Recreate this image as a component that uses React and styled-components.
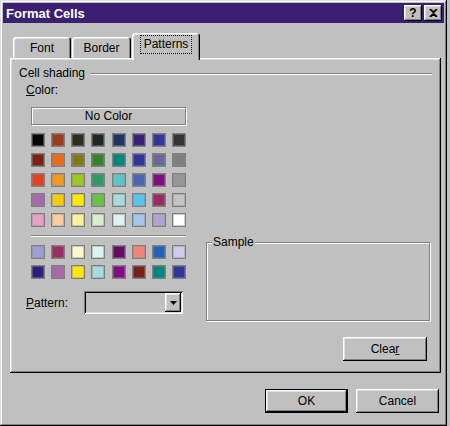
import styled, { createGlobalStyle } from "styled-components";

const GlobalStyle = createGlobalStyle`
  body {
    margin: 0;
    background: #c0c0c0;
    font-family: "Liberation Sans", Arial, sans-serif;
    font-size: 12px;
    color: #000;
  }
`;

const raised = `
  box-shadow: inset -1px -1px #000, inset 1px 1px #fff,
    inset -2px -2px #808080, inset 2px 2px #dfdfdf;
`;

const palette = [
  ["#050505", "#9a3a1e", "#2e2e1e", "#1e2a1e", "#1e3466", "#38207a", "#34349a", "#333333"],
  ["#7a1e18", "#ea6a1e", "#7e7a1a", "#34842e", "#00857e", "#30359a", "#686898", "#7e7e7e"],
  ["#e3401e", "#ee9a1e", "#a0c81e", "#2e9a6a", "#5ec4c4", "#4a64b4", "#820c82", "#969696"],
  ["#a868aa", "#f5cc10", "#fde80a", "#68c24a", "#a8dcdc", "#5ac4ea", "#9a2a60", "#c4c4c4"],
  ["#e8a0c6", "#fbcc9e", "#fdf29a", "#d8ecd0", "#ddf0f4", "#a4c8ec", "#b4a4d4", "#ffffff"],
];

const extra = [
  ["#9e9ed4", "#9a2e64", "#fdf9cc", "#dcf2f4", "#660a68", "#f08478", "#1e64b8", "#ccccec"],
  ["#2e1e7e", "#a868aa", "#fde80a", "#a8dcdc", "#820c82", "#7a1e18", "#00857e", "#30359a"],
];

export default function App() {
  return (
    <>
      <GlobalStyle />
      <Window>
        <TitleBar>
          <Title>Format Cells</Title>
          <Controls>
            <TitleButton>?</TitleButton>
            <TitleButton>
              <svg width="9" height="8" viewBox="0 0 9 8">
                <path d="M1 0 L4.5 3.2 L8 0 M1 8 L4.5 4.8 L8 8" stroke="#000" strokeWidth="1.8" fill="none" />
              </svg>
            </TitleButton>
          </Controls>
        </TitleBar>

        <Content>
          <TabRow>
            <Tab $width={58}>Font</Tab>
            <Tab $width={59}>Border</Tab>
            <Tab $width={68} $active>
              <Focus>Patterns</Focus>
            </Tab>
          </TabRow>

          <Panel>
            <SectionHeader>
              <span>Cell shading</span>
              <Etch />
            </SectionHeader>

            <PanelBody>
              <Label>
                <u>C</u>olor:
              </Label>
              <Columns>
                <LeftCol>
                  <Picker>
                    <NoColor>No Color</NoColor>
                    <Swatches>
                      {palette.flat().map((c, i) => (
                        <Swatch key={i} $color={c} />
                      ))}
                    </Swatches>
                    <Separator />
                    <Swatches>
                      {extra.flat().map((c, i) => (
                        <Swatch key={i} $color={c} />
                      ))}
                    </Swatches>
                  </Picker>
                  <PatternRow>
                    <PatternLabel>
                      <u>P</u>attern:
                    </PatternLabel>
                    <Select>
                      <ArrowButton>
                        <svg width="7" height="4" viewBox="0 0 7 4">
                          <polygon points="0,0 7,0 3.5,4" fill="#000" />
                        </svg>
                      </ArrowButton>
                    </Select>
                  </PatternRow>
                </LeftCol>

                <RightCol>
                  <GroupBox>
                    <Legend>Sample</Legend>
                  </GroupBox>
                  <Button $w={84} $align="end">
                    Clea<u>r</u>
                  </Button>
                </RightCol>
              </Columns>
            </PanelBody>
          </Panel>
        </Content>

        <Footer>
          <Button $w={83} $default>OK</Button>
          <Button $w={83}>Cancel</Button>
        </Footer>
      </Window>
    </>
  );
}

const Window = styled.div`
  width: 447px;
  height: 426px;
  box-sizing: border-box;
  padding: 3px;
  background: #c0c0c0;
  box-shadow: inset -1px -1px #000, inset 1px 1px #dfdfdf,
    inset -2px -2px #808080, inset 2px 2px #fff;
`;

const TitleBar = styled.div`
  height: 20px;
  display: flex;
  align-items: center;
  justify-content: space-between;
  padding: 0 2px 0 3px;
  background: #3b1f73;
`;

const Title = styled.span`
  color: #fff;
  font-weight: bold;
  font-size: 13px;
`;

const Controls = styled.div`
  display: flex;
  gap: 2px;
`;

const TitleButton = styled.div`
  width: 18px;
  height: 16px;
  display: flex;
  align-items: center;
  justify-content: center;
  background: #c0c0c0;
  font-weight: bold;
  font-size: 12px;
  ${raised}
`;

const Content = styled.div`
  padding: 0 3px 0 7px;
`;

const TabRow = styled.div`
  height: 25px;
  margin-top: 10px;
  display: flex;
  align-items: flex-end;
  gap: 1px;
  padding-left: 3px;
`;

const Tab = styled.div`
  width: ${(p) => p.$width}px;
  height: ${(p) => (p.$active ? 27 : 21)}px;
  margin-bottom: ${(p) => (p.$active ? -2 : 0)}px;
  position: relative;
  z-index: ${(p) => (p.$active ? 1 : 0)};
  box-sizing: border-box;
  display: flex;
  align-items: center;
  justify-content: center;
  padding-bottom: ${(p) => (p.$active ? 4 : 0)}px;
  background: #c0c0c0;
  border-radius: 3px 3px 0 0;
  box-shadow: inset 1px 1px #fff, inset -1px 0 #000, inset -2px 0 #808080,
    inset 2px 2px #dfdfdf;
`;

const Focus = styled.span`
  border: 1px dotted #000;
  padding: 1px 3px;
  line-height: 15px;
`;

const Panel = styled.div`
  height: 315px;
  box-sizing: border-box;
  padding: 8px 9px 0 9px;
  background: #c0c0c0;
  box-shadow: inset -1px -1px #000, inset 1px 1px #fff,
    inset -2px -2px #808080, inset 2px 2px #dfdfdf;
`;

const SectionHeader = styled.div`
  display: flex;
  align-items: center;
  gap: 5px;
  line-height: 15px;
`;

const Etch = styled.div`
  flex: 1;
  border-top: 1px solid #808080;
  border-bottom: 1px solid #fff;
`;

const PanelBody = styled.div`
  padding-left: 7px;
`;

const Label = styled.div`
  margin-top: 2px;
  line-height: 15px;
`;

const Columns = styled.div`
  display: flex;
  gap: 20px;
  margin-top: 9px;
`;

const LeftCol = styled.div`
  width: 160px;
`;

const Picker = styled.div`
  margin-left: 5px;
`;

const NoColor = styled.div`
  height: 18px;
  box-sizing: border-box;
  display: flex;
  align-items: center;
  justify-content: center;
  border: 1px solid #808080;
  box-shadow: inset 1px 1px #fff, 1px 1px #fff;
`;

const Swatches = styled.div`
  display: grid;
  grid-template-columns: repeat(8, 14px);
  justify-content: space-between;
  row-gap: 6px;
  margin-top: ${(p) => (p.$first ? 12 : 8)}px;
  &:first-of-type {
    margin-top: 12px;
  }
`;

const Swatch = styled.div`
  width: 14px;
  height: 14px;
  box-sizing: border-box;
  background: ${(p) => p.$color};
  border: 1px solid #7f7f7f;
  box-shadow: inset 0 0 0 1px rgba(140, 140, 140, 0.45);
`;

const Separator = styled.div`
  margin-top: 8px;
  border-top: 1px solid #808080;
  border-bottom: 1px solid #fff;
`;

const PatternRow = styled.div`
  display: flex;
  align-items: center;
  margin-top: 12px;
`;

const PatternLabel = styled.span`
  width: 58px;
`;

const Select = styled.div`
  width: 99px;
  height: 23px;
  box-sizing: border-box;
  padding: 2px;
  display: flex;
  justify-content: flex-end;
  box-shadow: inset 1px 1px #808080, inset -1px -1px #fff,
    inset 2px 2px #000, inset -2px -2px #dfdfdf;
`;

const ArrowButton = styled.div`
  width: 16px;
  height: 19px;
  display: flex;
  align-items: center;
  justify-content: center;
  background: #c0c0c0;
  ${raised}
`;

const RightCol = styled.div`
  width: 224px;
  display: flex;
  flex-direction: column;
`;

const GroupBox = styled.div`
  position: relative;
  margin-top: 135px;
  height: 77px;
  border: 1px solid #808080;
  box-shadow: inset 1px 1px #fff, 1px 1px #fff;
`;

const Legend = styled.span`
  position: absolute;
  top: -8px;
  left: 5px;
  padding: 0 1px;
  line-height: 15px;
  background: #c0c0c0;
`;

const Button = styled.div`
  width: ${(p) => p.$w}px;
  height: 24px;
  box-sizing: border-box;
  display: flex;
  align-items: center;
  justify-content: center;
  align-self: ${(p) => (p.$align === "end" ? "flex-end" : "auto")};
  margin-top: ${(p) => (p.$align === "end" ? 16 : 0)}px;
  margin-right: ${(p) => (p.$align === "end" ? 3 : 0)}px;
  background: #c0c0c0;
  border: ${(p) => (p.$default ? "1px solid #000" : "none")};
  ${raised}
`;

const Footer = styled.div`
  display: flex;
  justify-content: flex-end;
  gap: 8px;
  margin-top: 16px;
  padding-right: 5px;
`;
